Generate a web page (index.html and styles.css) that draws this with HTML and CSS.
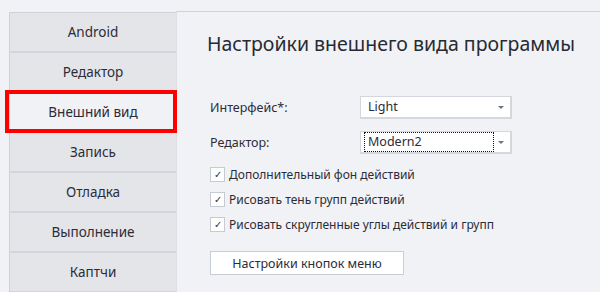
FILE: index.html
```html
<!DOCTYPE html>
<html lang="ru">
<head>
    <meta charset="UTF-8">
    <title>Настройки</title>
    <link rel="stylesheet" href="styles.css">
</head>
<body>
    <div class="window">
        <!-- Settings sections -->
        <ul class="sidebar">
            <li class="nav-item">Android</li>
            <li class="nav-item">Редактор</li>
            <li class="nav-item active">Внешний вид</li>
            <li class="nav-item">Запись</li>
            <li class="nav-item">Отладка</li>
            <li class="nav-item">Выполнение</li>
            <li class="nav-item">Каптчи</li>
        </ul>

        <!-- Appearance page -->
        <div class="panel">
            <h1 class="title">Настройки внешнего вида программы</h1>

            <div class="field">
                <span class="field-label">Интерфейс*:</span>
                <div class="select">
                    <span class="select-value">Light</span>
                    <span class="arrow"></span>
                </div>
            </div>
            <div class="field">
                <span class="field-label">Редактор:</span>
                <div class="select focused">
                    <span class="select-value">Modern2</span>
                    <span class="arrow"></span>
                </div>
            </div>

            <div class="checks">
                <label class="check"><span class="box">&#10003;</span>Дополнительный фон действий</label>
                <label class="check"><span class="box">&#10003;</span>Рисовать тень групп действий</label>
                <label class="check"><span class="box">&#10003;</span>Рисовать скругленные углы действий и групп</label>
            </div>

            <button class="menu-btn">Настройки кнопок меню</button>
        </div>
    </div>
</body>
</html>
```

FILE: styles.css
```css
body {
    margin: 0;
    background-color: #f1f2f6;
    font-family: "Noto Sans", sans-serif;
    font-size: 12.5px;
    color: #2c2c38;
    overflow: hidden;
}
.window {
    display: flex;
    height: 292px;
}
.sidebar {
    list-style: none;
    margin: 12px 0 0 9px;
    padding: 0;
    width: 166px;
    border-left: 1px solid #cdd1d8;
    border-top: 1px solid #cdd1d8;
    flex-shrink: 0;
}
.nav-item {
    height: 38px;
    line-height: 38px;
    text-align: center;
    background-color: #e4e5e9;
    border-bottom: 2px solid #d1d5dc;
    font-size: 13.5px;
}
.nav-item.active {
    position: relative;
    background-color: #f1f2f6;
}
.nav-item.active::after {
    content: "";
    position: absolute;
    left: -5px;
    right: -1px;
    top: -3px;
    bottom: -2px;
    border: 4px solid #ff0000;
}
.panel {
    flex: 1;
    margin-top: 11px;
    border-top: 1px solid #cfd2d8;
    border-left: 1px solid #dcdfe5;
    padding: 18px 0 0 33px;
}
.title {
    margin: 0 0 39px -3px;
    font-size: 19.5px;
    font-weight: normal;
    color: #272a33;
}
.field {
    display: flex;
    align-items: center;
    margin-bottom: 12px;
}
.field-label {
    width: 150px;
}
.select {
    position: relative;
    width: 146px;
    height: 20px;
    background-color: #fff;
    border: 2px solid #d4d7de;
    border-width: 1px 2px 2px 1px;
    display: flex;
    align-items: center;
    padding-left: 3px;
}
.select-value {
    flex: 1;
    height: 18px;
    line-height: 18px;
    padding-left: 3px;
    border: 1px dotted transparent;
    margin-right: 16px;
}
.select.focused .select-value {
    border-color: #111;
}
.arrow {
    position: absolute;
    right: 6px;
    top: 9px;
    border-left: 3px solid transparent;
    border-right: 3px solid transparent;
    border-top: 3px solid #6e7380;
}
.checks {
    display: flex;
    flex-direction: column;
    gap: 9px;
    margin-top: 2px;
    font-size: 12px;
}
.check {
    display: flex;
    align-items: center;
    gap: 4px;
    height: 16px;
}
.box {
    width: 13px;
    height: 13px;
    border: 1px solid #c6cad2;
    background-color: #fff;
    font-size: 10px;
    line-height: 13px;
    text-align: center;
    color: #333;
}
.menu-btn {
    margin-top: 19px;
    width: 194px;
    height: 24px;
    background-color: #fff;
    border: 1px solid #c9cdd5;
    font-family: "Noto Sans", sans-serif;
    font-size: 12.5px;
    color: #2c2c38;
    padding: 0;
}
```
